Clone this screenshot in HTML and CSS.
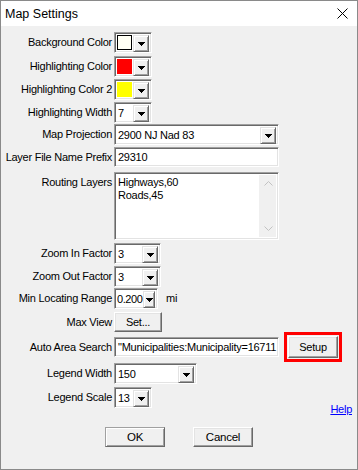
FILE: index.html
```html
<!DOCTYPE html>
<html>
<head>
<meta charset="utf-8">
<link rel="stylesheet" href="styles.css">
</head>
<body>
<div class="win">
  <div class="titlebar">
    <span class="title">Map Settings</span>
    <svg class="close" width="11" height="11" viewBox="0 0 11 11"><path d="M0.5 0.5L10.5 10.5M10.5 0.5L0.5 10.5" stroke="#000" stroke-width="1" fill="none"/></svg>
  </div>
  <div class="form">
    <div class="row h24">
      <div class="lbl">Background Color</div>
      <div class="combo w38"><div class="swatch sw-ivory"></div><div class="dd"><svg width="7" height="4"><path d="M0 0h7v1h-1v1h-1v1h-1v1h-1v-1h-1v-1h-1v-1h-1z"/></svg></div></div>
    </div>
    <div class="row h23">
      <div class="lbl">Highlighting Color</div>
      <div class="combo w38"><div class="swatch sw-red"></div><div class="dd"><svg width="7" height="4"><path d="M0 0h7v1h-1v1h-1v1h-1v1h-1v-1h-1v-1h-1v-1h-1z"/></svg></div></div>
    </div>
    <div class="row h23">
      <div class="lbl">Highlighting Color 2</div>
      <div class="combo w38"><div class="swatch sw-yellow"></div><div class="dd"><svg width="7" height="4"><path d="M0 0h7v1h-1v1h-1v1h-1v1h-1v-1h-1v-1h-1v-1h-1z"/></svg></div></div>
    </div>
    <div class="row h22">
      <div class="lbl">Highlighting Width</div>
      <div class="combo w38"><div class="val">7</div><div class="dd"><svg width="7" height="4"><path d="M0 0h7v1h-1v1h-1v1h-1v1h-1v-1h-1v-1h-1v-1h-1z"/></svg></div></div>
    </div>
    <div class="row h23">
      <div class="lbl">Map Projection</div>
      <div class="combo w165"><div class="val">2900 NJ Nad 83</div><div class="dd"><svg width="7" height="4"><path d="M0 0h7v1h-1v1h-1v1h-1v1h-1v-1h-1v-1h-1v-1h-1z"/></svg></div></div>
    </div>
    <div class="row h25">
      <div class="lbl">Layer File Name Prefix</div>
      <div class="text w165">29310</div>
    </div>
    <div class="row h71">
      <div class="lbl">Routing Layers</div>
      <div class="area w165">
        <div class="lines">Highways,60<br>Roads,45</div>
        <div class="sbar">
          <svg width="9" height="5"><polyline points="0.5,4.5 4.5,0.5 8.5,4.5" fill="none" stroke="#c2c2c2"/></svg>
          <svg width="9" height="5"><polyline points="0.5,0.5 4.5,4.5 8.5,0.5" fill="none" stroke="#c2c2c2"/></svg>
        </div>
      </div>
    </div>
    <div class="row h23">
      <div class="lbl">Zoom In Factor</div>
      <div class="combo w47"><div class="val">3</div><div class="dd"><svg width="7" height="4"><path d="M0 0h7v1h-1v1h-1v1h-1v1h-1v-1h-1v-1h-1v-1h-1z"/></svg></div></div>
    </div>
    <div class="row h22">
      <div class="lbl">Zoom Out Factor</div>
      <div class="combo w47"><div class="val">3</div><div class="dd"><svg width="7" height="4"><path d="M0 0h7v1h-1v1h-1v1h-1v1h-1v-1h-1v-1h-1v-1h-1z"/></svg></div></div>
    </div>
    <div class="row h24">
      <div class="lbl">Min Locating Range</div>
      <div class="combo w44"><div class="val tight">0.200</div><div class="dd narrow"><svg width="7" height="4"><path d="M0 0h7v1h-1v1h-1v1h-1v1h-1v-1h-1v-1h-1v-1h-1z"/></svg></div></div>
      <div class="unit">mi</div>
    </div>
    <div class="row h25">
      <div class="lbl">Max View</div>
      <div class="btn w48">Set...</div>
    </div>
    <div class="row h26">
      <div class="lbl">Auto Area Search</div>
      <div class="text w165 clip">"Municipalities:Municipality=16711</div>
      <div class="hl"><div class="btn setup">Setup</div></div>
    </div>
    <div class="row h24">
      <div class="lbl">Legend Width</div>
      <div class="combo w83"><div class="val">150</div><div class="dd"><svg width="7" height="4"><path d="M0 0h7v1h-1v1h-1v1h-1v1h-1v-1h-1v-1h-1v-1h-1z"/></svg></div></div>
    </div>
    <div class="row h17">
      <div class="lbl">Legend Scale</div>
      <div class="combo w38"><div class="val">13</div><div class="dd"><svg width="7" height="4"><path d="M0 0h7v1h-1v1h-1v1h-1v1h-1v-1h-1v-1h-1v-1h-1z"/></svg></div></div>
    </div>
    <div class="help"><span class="link">Help</span></div>
    <div class="buttons">
      <div class="btn dlg def">OK</div>
      <div class="btn dlg">Cancel</div>
    </div>
  </div>
</div>
</body>
</html>
```

FILE: styles.css
```css
* { box-sizing: border-box; }
body {
  margin: 0;
  font-family: "Liberation Sans", Arial, sans-serif;
  font-size: 11px;
  letter-spacing: -0.25px;
  color: #000;
  background: #fff;
}
.win {
  width: 358px;
  height: 470px;
  border: 1px solid #8a8a8a;
  background: #f0f0f0;
  display: flex;
  flex-direction: column;
}
.titlebar {
  height: 25px;
  flex: none;
  background: #fff;
  display: flex;
  align-items: center;
  justify-content: space-between;
  padding: 0 9px 0 4px;
  font-size: 12.5px;
  letter-spacing: 0;
}
.close { display: block; }
.form {
  padding-top: 6px;
  display: flex;
  flex-direction: column;
}
.row {
  display: flex;
  align-items: flex-start;
  flex: none;
}
.h17 { height: 17px; }
.h22 { height: 22px; }
.h23 { height: 23px; }
.h24 { height: 24px; }
.h25 { height: 25px; }
.h26 { height: 26px; }
.h71 { height: 71px; }
.lbl {
  width: 113px;
  padding-right: 2px;
  text-align: right;
  line-height: 21px;
  white-space: nowrap;
  flex: none;
}
.w38 { width: 38px; }
.w44 { width: 44px; }
.w47 { width: 47px; }
.w48 { width: 48px; }
.w83 { width: 83px; }
.w165 { width: 165px; }
.combo {
  height: 21px;
  flex: none;
  border: 1px solid;
  border-color: #a0a0a0 #fff #fff #a0a0a0;
  box-shadow: inset 1px 1px #696969, inset -1px -1px #e3e3e3;
  background: #fff;
  display: flex;
  padding: 2px;
}
.val {
  flex: 1;
  padding-left: 1px;
  line-height: 17px;
  white-space: nowrap;
  overflow: hidden;
}
.val.tight { padding-left: 0; letter-spacing: -0.4px; }
.swatch {
  flex: 1;
  margin-right: 1px;
}
.sw-ivory { background: #fffff4; border: 1px solid #000; }
.sw-red { background: #ff0000; }
.sw-yellow { background: #ffff00; }
.dd {
  width: 16px;
  height: 17px;
  flex: none;
  background: #f0f0f0;
  border: 1px solid;
  border-color: #e3e3e3 #696969 #696969 #e3e3e3;
  box-shadow: inset 1px 1px #fff, inset -1px -1px #a0a0a0;
  display: flex;
  align-items: center;
  justify-content: center;
}
.dd.narrow { width: 12px; }
.dd svg { display: block; fill: #000; flex: none; }
.text {
  height: 20px;
  flex: none;
  border: 1px solid;
  border-color: #a0a0a0 #fff #fff #a0a0a0;
  box-shadow: inset 1px 1px #696969, inset -1px -1px #e3e3e3;
  background: #fff;
  padding: 0 2px 0 3px;
  line-height: 18px;
  white-space: nowrap;
  overflow: hidden;
}
.area {
  height: 68px;
  flex: none;
  border: 1px solid;
  border-color: #a0a0a0 #fff #fff #a0a0a0;
  box-shadow: inset 1px 1px #696969, inset -1px -1px #e3e3e3;
  background: #fff;
  display: flex;
  padding: 2px;
}
.lines {
  flex: 1;
  padding: 1px 0 0 1px;
  line-height: 13px;
}
.sbar {
  width: 17px;
  flex: none;
  background: #f0f0f0;
  display: flex;
  flex-direction: column;
  justify-content: space-between;
  align-items: center;
  padding: 6px 0 6px 1px;
}
.sbar svg { display: block; }
.unit {
  margin-left: 8px;
  line-height: 21px;
}
.btn {
  height: 20px;
  flex: none;
  background: #f0f0f0;
  border: 1px solid;
  border-color: #fff #696969 #696969 #fff;
  box-shadow: inset -1px -1px #a0a0a0, inset 1px 1px #e3e3e3;
  text-align: center;
  line-height: 18px;
}
.hl {
  margin: -5px 0 0 5px;
  width: 58px;
  height: 30px;
  border: 3px solid #ff0000;
  padding: 1px 1px;
  flex: none;
}
.setup { width: 50px; height: 22px; line-height: 20px; }
.help {
  height: 14px;
  margin-top: -2px;
  text-align: right;
  padding-right: 5px;
  line-height: 14px;
}
.link { color: #0000ff; text-decoration: underline; }
.buttons {
  margin-top: 11px;
  display: flex;
  justify-content: center;
  gap: 28px;
}
.dlg { width: 60px; height: 20px; font-size: 11.5px; }
.def {
  border-color: #a0a0a0 #696969 #696969 #a0a0a0;
  box-shadow: inset 1px 1px #fff, inset -1px -1px #a0a0a0;
}
```
